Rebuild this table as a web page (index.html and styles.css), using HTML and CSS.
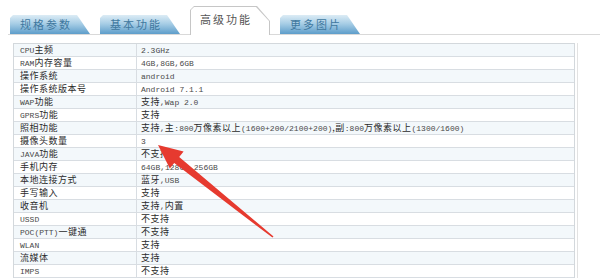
FILE: index.html
```html
<!DOCTYPE html>
<html lang="zh-CN">
<head>
<meta charset="utf-8">
<title>高级功能</title>
<link rel="stylesheet" href="styles.css">
</head>
<body>
<div class="tabs">
  <div class="tab">规格参数</div>
  <div class="tab">基本功能</div>
  <div class="tab tab-active"><div class="tab-inner">高级功能</div></div>
  <div class="tab">更多图片</div>
</div>

<div class="frame">
  <div class="spec">
    <div class="row"><div class="k"><span class="en">CPU</span>主频</div><div class="v"><span class="en">2.3GHz</span></div></div>
    <div class="row"><div class="k"><span class="en">RAM</span>内存容量</div><div class="v"><span class="en">4GB,8GB,6GB</span></div></div>
    <div class="row"><div class="k">操作系统</div><div class="v"><span class="en">android</span></div></div>
    <div class="row"><div class="k">操作系统版本号</div><div class="v"><span class="en">Android 7.1.1</span></div></div>
    <div class="row"><div class="k"><span class="en">WAP</span>功能</div><div class="v">支持<span class="en">,Wap 2.0</span></div></div>
    <div class="row"><div class="k"><span class="en">GPRS</span>功能</div><div class="v">支持</div></div>
    <div class="row"><div class="k">照相功能</div><div class="v">支持<span class="en">,</span>主<span class="en">:800</span>万像素以上<span class="en">(1600+200/2100+200)</span>,副<span class="en">:800</span>万像素以上<span class="en">(1300/1600)</span></div></div>
    <div class="row"><div class="k">摄像头数量</div><div class="v"><span class="en">3</span></div></div>
    <div class="row"><div class="k"><span class="en">JAVA</span>功能</div><div class="v">不支持</div></div>
    <div class="row"><div class="k">手机内存</div><div class="v"><span class="en">64GB,128GB,256GB</span></div></div>
    <div class="row"><div class="k">本地连接方式</div><div class="v">蓝牙<span class="en">,USB</span></div></div>
    <div class="row"><div class="k">手写输入</div><div class="v">支持</div></div>
    <div class="row"><div class="k">收音机</div><div class="v">支持<span class="en">,</span>内置</div></div>
    <div class="row"><div class="k"><span class="en">USSD</span></div><div class="v">不支持</div></div>
    <div class="row"><div class="k"><span class="en">POC(PTT)</span>一键通</div><div class="v">不支持</div></div>
    <div class="row"><div class="k"><span class="en">WLAN</span></div><div class="v">支持</div></div>
    <div class="row"><div class="k">流媒体</div><div class="v">支持</div></div>
    <div class="row"><div class="k"><span class="en">IMPS</span></div><div class="v">不支持</div></div>
  </div>
</div>

<!-- red pointer drawn over the spec table -->
<svg class="pointer" width="600" height="280" viewBox="0 0 600 280" aria-hidden="true">
  <polygon points="158,145 183.6,151.4 179.2,156.9 273.5,236.6 272.4,237.6 174.2,163.1 169.8,168.6" fill="#e63a2f"/>
</svg>
</body>
</html>
```

FILE: styles.css
```css
* { box-sizing: border-box; }

body {
  margin: 0;
  width: 600px;
  height: 280px;
  overflow: hidden;
  position: relative;
  background: #fff;
  font-family: "Noto Sans CJK SC", "Noto Sans", sans-serif;
  font-size: 9px;
  color: #2b2b2b;
}

/* tab strip */
.tabs {
  display: flex;
  align-items: flex-end;
  gap: 10px;
  height: 35px;
  margin-left: 8px;
  padding-left: 2px;
  border-bottom: 1px solid #d9d9d9;
}

.tab {
  width: 80px;
  height: 19px;
  padding-left: 10px;
  line-height: 19px;
  font-size: 11px;
  letter-spacing: 2px;
  color: #3f789f;
  background: linear-gradient(to bottom, #dcecf5 0%, #a8cee6 45%, #5d9dca 100%);
  clip-path: polygon(0 3px, 3px 0, calc(100% - 13px) 0, 100% 100%, 0 100%);
}

.tab-active {
  height: 29px;
  margin-bottom: -1px;
  padding: 1px 1px 0 1px;
  background: #c6c6c6;
  clip-path: polygon(0 4px, 4px 0, calc(100% - 13px) 0, 100% 15px, 100% 100%, 0 100%);
}

.tab-inner {
  height: 100%;
  padding-left: 9px;
  line-height: 24px;
  color: #555;
  background: #fff;
  clip-path: polygon(0 3px, 3px 0, calc(100% - 13px) 0, 100% 14px, 100% 100%, 0 100%);
}

/* spec table */
.frame {
  margin: 8px 22px 0 13px;
  padding-right: 2px;
  border-right: 1px solid #e2e2e2;
}

.spec {
  border: 1px solid #d3d8dc;
  border-bottom: 0;
}

.row {
  display: grid;
  grid-template-columns: 123px 1fr;
  height: 13px;
  line-height: 12px;
  border-bottom: 1px solid #d8dde2;
  white-space: nowrap;
  letter-spacing: 0.5px;
}

.row:nth-child(odd) { background: #f3f8fb; }

.k {
  padding-left: 6px;
  border-right: 1px solid #d8dde2;
}

.v { padding-left: 4px; }

.en {
  font-family: "Liberation Mono", monospace;
  font-size: 8px;
  letter-spacing: 0;
  color: #4a4a4a;
}

.pointer {
  position: absolute;
  left: 0;
  top: 0;
  pointer-events: none;
}
```
